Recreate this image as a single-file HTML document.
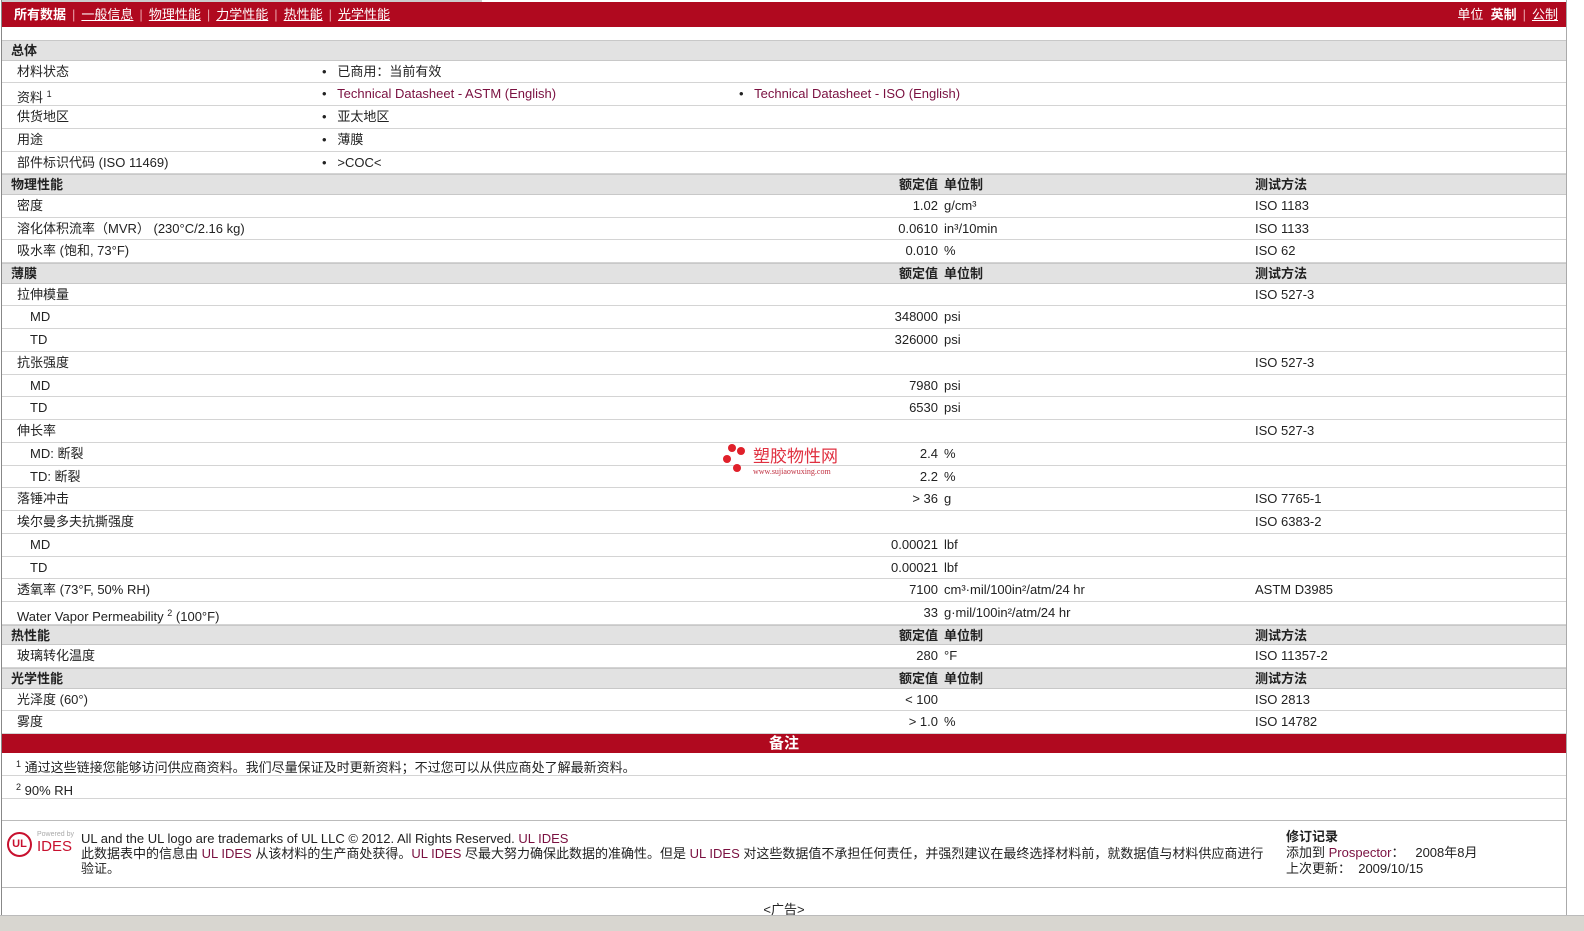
<!DOCTYPE html>
<html><head><meta charset="utf-8"><style>
*{margin:0;padding:0;box-sizing:border-box}
body{width:1584px;height:931px;overflow:hidden;background:#fff;font-family:"Liberation Sans","Noto Sans CJK SC",sans-serif;font-size:13px;color:#222;position:relative}
.wrap{position:absolute;left:1px;top:0;width:1566px;height:915px;border-left:1px solid #888;border-right:1px solid #aaa}
.tabs{position:absolute;left:0;top:0;height:2px;width:480px;background:#ccc}
.bar{position:absolute;left:0;top:2px;width:100%;height:25px;background:#b0091f;color:#fff;font-size:13px;line-height:25px;padding-left:12px}
.bar a{color:#fff;text-decoration:underline}
.bar b{font-weight:bold}
.bar .sep{color:#e8a0a8;margin:0 6px}
.bar .r{position:absolute;right:8px;top:0}
.tbl{position:absolute;left:0;top:40px;width:100%}
.row{position:relative;height:22.75px;border-bottom:1px solid #d4d4d4;line-height:22px;white-space:nowrap}
.h{height:20.5px;background:#e2e2e2;font-weight:bold;line-height:20px;border-top:1px solid #c8c8c8;border-bottom:1px solid #c8c8c8}
.row span{position:absolute}
.l{left:15px}.hl{left:9px}.s{left:28px}
.v{right:628px;text-align:right}
.u{left:942px}
.m{left:1253px}
.b1{left:320px}.b2{left:737px}
.lk{color:#7a1040}
.red{height:19px;background:#b0091f;color:#fff;text-align:center;font-weight:bold;font-size:15px;line-height:19px}
sup{font-size:9px;vertical-align:5px}
.foot{position:absolute;left:0;top:820px;width:100%;height:68px;border-top:1px solid #bbb;border-bottom:1px solid #bbb}
.ad{position:absolute;left:0;top:899px;width:100%;text-align:center}
.bottom{position:absolute;left:0;top:915px;width:1584px;height:16px;background:#d8d6d0;border-top:1px solid #bbb}
</style></head><body>
<div class="wrap">
<div class="tabs"></div>
<div class="bar"><b>所有数据</b><span class="sep">|</span><a>一般信息</a><span class="sep">|</span><a>物理性能</a><span class="sep">|</span><a>力学性能</a><span class="sep">|</span><a>热性能</a><span class="sep">|</span><a>光学性能</a>
<span class="r">单位 &nbsp;<b>英制</b><span class="sep">|</span><a>公制</a></span></div>
<div class="tbl">
<div class="row h"><span class="hl">总体</span></div>
<div class="row"><span class="l">材料状态</span><span class="b1">•&nbsp;&nbsp; 已商用：当前有效</span></div>
<div class="row"><span class="l">资料 <sup>1</sup></span><span class="b1">•&nbsp;&nbsp; <span class="lk" style="position:static">Technical Datasheet - ASTM (English)</span></span><span class="b2">•&nbsp;&nbsp; <span class="lk" style="position:static">Technical Datasheet - ISO (English)</span></span></div>
<div class="row"><span class="l">供货地区</span><span class="b1">•&nbsp;&nbsp; 亚太地区</span></div>
<div class="row"><span class="l">用途</span><span class="b1">•&nbsp;&nbsp; 薄膜</span></div>
<div class="row"><span class="l">部件标识代码 (ISO 11469)</span><span class="b1">•&nbsp;&nbsp; &gt;COC&lt;</span></div>
<div class="row h"><span class="hl">物理性能</span><span class="v">额定值</span><span class="u">单位制</span><span class="m">测试方法</span></div>
<div class="row"><span class="l">密度</span><span class="v">1.02</span><span class="u">g/cm³</span><span class="m">ISO 1183</span></div>
<div class="row"><span class="l">溶化体积流率（MVR） (230°C/2.16 kg)</span><span class="v">0.0610</span><span class="u">in³/10min</span><span class="m">ISO 1133</span></div>
<div class="row"><span class="l">吸水率 (饱和, 73°F)</span><span class="v">0.010</span><span class="u">%</span><span class="m">ISO 62</span></div>
<div class="row h"><span class="hl">薄膜</span><span class="v">额定值</span><span class="u">单位制</span><span class="m">测试方法</span></div>
<div class="row"><span class="l">拉伸模量</span><span class="m">ISO 527-3</span></div>
<div class="row"><span class="s">MD</span><span class="v">348000</span><span class="u">psi</span></div>
<div class="row"><span class="s">TD</span><span class="v">326000</span><span class="u">psi</span></div>
<div class="row"><span class="l">抗张强度</span><span class="m">ISO 527-3</span></div>
<div class="row"><span class="s">MD</span><span class="v">7980</span><span class="u">psi</span></div>
<div class="row"><span class="s">TD</span><span class="v">6530</span><span class="u">psi</span></div>
<div class="row"><span class="l">伸长率</span><span class="m">ISO 527-3</span></div>
<div class="row"><span class="s">MD: 断裂</span><span class="v">2.4</span><span class="u">%</span></div>
<div class="row"><span class="s">TD: 断裂</span><span class="v">2.2</span><span class="u">%</span></div>
<div class="row"><span class="l">落锤冲击</span><span class="v">&gt; 36</span><span class="u">g</span><span class="m">ISO 7765-1</span></div>
<div class="row"><span class="l">埃尔曼多夫抗撕强度</span><span class="m">ISO 6383-2</span></div>
<div class="row"><span class="s">MD</span><span class="v">0.00021</span><span class="u">lbf</span></div>
<div class="row"><span class="s">TD</span><span class="v">0.00021</span><span class="u">lbf</span></div>
<div class="row"><span class="l">透氧率 (73°F, 50% RH)</span><span class="v">7100</span><span class="u">cm³·mil/100in²/atm/24 hr</span><span class="m">ASTM D3985</span></div>
<div class="row"><span class="l">Water Vapor Permeability <sup>2</sup> (100°F)</span><span class="v">33</span><span class="u">g·mil/100in²/atm/24 hr</span></div>
<div class="row h"><span class="hl">热性能</span><span class="v">额定值</span><span class="u">单位制</span><span class="m">测试方法</span></div>
<div class="row"><span class="l">玻璃转化温度</span><span class="v">280</span><span class="u">°F</span><span class="m">ISO 11357-2</span></div>
<div class="row h"><span class="hl">光学性能</span><span class="v">额定值</span><span class="u">单位制</span><span class="m">测试方法</span></div>
<div class="row"><span class="l">光泽度 (60°)</span><span class="v">&lt; 100</span><span class="m">ISO 2813</span></div>
<div class="row"><span class="l">雾度</span><span class="v">&gt; 1.0</span><span class="u">%</span><span class="m">ISO 14782</span></div>
<div class="red">备注</div>
<div class="row"><span class="l" style="left:14px"><sup>1</sup> 通过这些链接您能够访问供应商资料。我们尽量保证及时更新资料；不过您可以从供应商处了解最新资料。</span></div>
<div class="row"><span class="l" style="left:14px"><sup>2</sup> 90% RH</span></div>
</div>
<div style="position:absolute;left:721px;top:444px;width:130px;height:34px">
<div style="position:absolute;left:5px;top:0;width:8px;height:8px;border-radius:50%;background:#e0202a"></div>
<div style="position:absolute;left:14px;top:3px;width:8px;height:8px;border-radius:50%;background:#e0202a"></div>
<div style="position:absolute;left:0;top:11px;width:8px;height:8px;border-radius:50%;background:#e0202a"></div>
<div style="position:absolute;left:10px;top:20px;width:8px;height:8px;border-radius:50%;background:#e0202a"></div>
<div style="position:absolute;left:30px;top:3px;color:#e03040;font-size:17px;line-height:20px">塑胶物性网</div>
<div style="position:absolute;left:30px;top:23px;color:#c03040;font-size:8px;font-family:'Liberation Serif',serif">www.sujiaowuxing.com</div>
</div>
<div class="foot">
<div style="position:absolute;left:5px;top:11px;width:25px;height:25px;border:2.5px solid #c8102e;border-radius:50%;color:#c8102e;font-size:11px;font-weight:bold;text-align:center;line-height:20px">UL</div>
<div style="position:absolute;left:35px;top:10px;color:#aaa;font-size:7px">Powered by</div>
<div style="position:absolute;left:35px;top:17px;color:#c8102e;font-size:15px">IDES</div>
<div style="position:absolute;left:79px;top:10px;line-height:15px;width:1185px;white-space:normal">UL and the UL logo are trademarks of UL LLC © 2012. All Rights Reserved. <span class="lk">UL IDES</span><br>此数据表中的信息由 <span class="lk">UL IDES</span> 从该材料的生产商处获得。<span class="lk">UL IDES</span> 尽最大努力确保此数据的准确性。但是 <span class="lk">UL IDES</span> 对这些数据值不承担任何责任，并强烈建议在最终选择材料前，就数据值与材料供应商进行验证。</div>
<div style="position:absolute;left:1284px;top:8px;line-height:16px"><b>修订记录</b><br>添加到 <span class="lk">Prospector</span>： &nbsp; 2008年8月<br>上次更新： &nbsp;2009/10/15</div>
</div>
<div class="ad">&lt;广告&gt;</div>
</div>
<div class="bottom"></div>
</body></html>
